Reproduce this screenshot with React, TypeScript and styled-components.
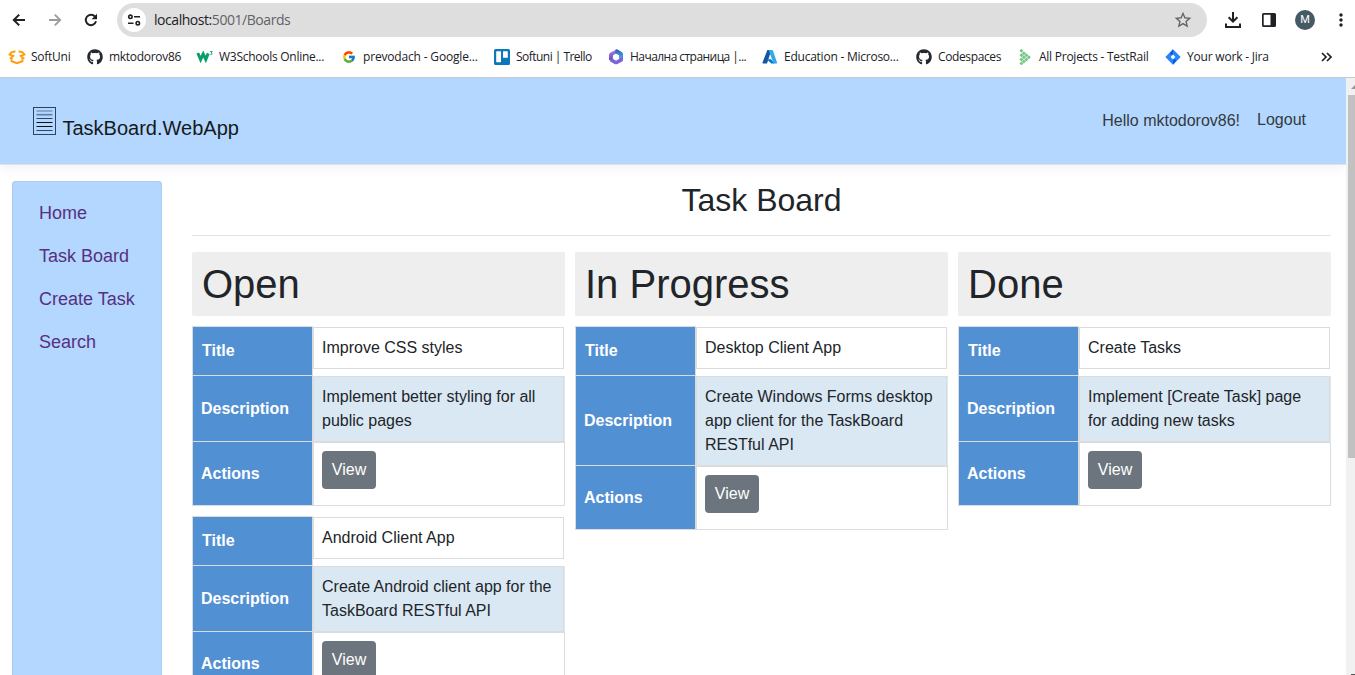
import React from 'react';
import styled, { createGlobalStyle } from 'styled-components';
import { FaGithub } from 'react-icons/fa';
import { FcGoogle } from 'react-icons/fc';
import { MdStarBorder, MdMoreVert } from 'react-icons/md';

const GlobalStyle = createGlobalStyle`
  *, *::before, *::after { box-sizing: border-box; }
  html, body { margin: 0; padding: 0; overflow: hidden; background: #fff; }
  body { font-family: "Liberation Sans", Arial, sans-serif; font-size: 16px; line-height: 1.5; color: #212529; }
  h1, h2, p { margin: 0; font-weight: 400; }
  svg { display: block; flex: none; }
`;

const Window = styled.div`
  display: flex;
  flex-direction: column;
  width: 1355px;
  height: 675px;
  overflow: hidden;
`;

const Toolbar = styled.div`
  display: flex;
  align-items: center;
  height: 40px;
  flex: none;
  padding-left: 9px;
  color: #202124;
`;

const ToolButton = styled.span<{ $width: number; $color?: string }>`
  display: flex;
  justify-content: center;
  width: ${(p) => p.$width}px;
  color: ${(p) => p.$color ?? '#202124'};
`;

const AddressBar = styled.div`
  display: flex;
  align-items: center;
  width: 1090px;
  height: 34px;
  padding: 0 14px 0 5px;
  border-radius: 17px;
  background: #dedede;
`;

const SiteInfo = styled.span`
  display: flex;
  align-items: center;
  justify-content: center;
  width: 24px;
  height: 24px;
  border-radius: 50%;
  background: #fff;
`;

const Url = styled.span`
  flex: 1;
  padding-left: 8px;
  font: 14px/20px "Open Sans", "Noto Sans", sans-serif;
  letter-spacing: -0.45px;
  color: #5f6368;
  b { font-weight: 400; color: #202124; }
`;

const Avatar = styled.span`
  width: 20px;
  height: 20px;
  border-radius: 50%;
  background: #455a64;
  color: #fff;
  font: 11px/20px Roboto, sans-serif;
  text-align: center;
`;

const Bookmarks = styled.div`
  display: flex;
  align-items: center;
  height: 38px;
  flex: none;
  padding: 0 0 3px 8px;
  border-bottom: 1px solid #c9cacc;
`;

const Bookmark = styled.span<{ $width: number; $spacing: number }>`
  display: flex;
  align-items: center;
  flex: none;
  gap: 5px;
  width: ${(p) => p.$width}px;
  white-space: nowrap;
  font: 12px/16px "Open Sans", "Noto Sans", sans-serif;
  letter-spacing: ${(p) => p.$spacing}px;
  color: #202124;
`;

const IconSlot = styled.span`
  display: flex;
  justify-content: center;
  width: 18px;
`;

const Viewport = styled.div`
  display: flex;
  flex: 1;
  min-height: 0;
`;

const Page = styled.div`
  display: flex;
  flex-direction: column;
  width: 1346px;
  overflow: hidden;
`;

const Header = styled.header`
  display: flex;
  justify-content: space-between;
  height: 87px;
  flex: none;
  padding: 0 40px 0 32px;
  background: #b3d7ff;
  border-bottom: 1px solid #dee2e6;
  box-shadow: 0 4px 12px rgba(0, 0, 0, 0.05);
`;

const Brand = styled.div`
  display: flex;
  align-items: flex-start;
  gap: 5.5px;
  padding-top: 28px;
`;

const BrandName = styled.span`
  padding-top: 7px;
  font-size: 20px;
  line-height: 30px;
  color: #16191c;
`;

const UserLinks = styled.div`
  display: flex;
  gap: 17px;
  padding-top: 30px;
  line-height: 24px;
  color: #343a40;
`;

const Greeting = styled.span`
  padding-top: 1px;
`;

const Body = styled.div`
  display: flex;
  flex: 1;
  gap: 30px;
  min-height: 0;
  padding: 16px 15px 0 12px;
`;

const Sidebar = styled.nav`
  display: flex;
  flex-direction: column;
  width: 150px;
  height: 600px;
  padding: 10px 0 0 26px;
  background: #b3d7ff;
  border: 1px solid #a9cdf3;
  border-radius: 3px;
`;

const NavItem = styled.a`
  height: 43px;
  font-size: 18px;
  line-height: 43px;
  color: #563081;
`;

const Main = styled.main`
  width: 1139px;
`;

const PageTitle = styled.h2`
  height: 55px;
  border-bottom: 1px solid #e2e2e3;
  font-size: 32px;
  line-height: 38px;
  text-align: center;
`;

const Columns = styled.div`
  display: flex;
  align-items: flex-start;
  gap: 10px;
  padding-top: 16px;
`;

const Column = styled.section`
  display: flex;
  flex-direction: column;
  gap: 10px;
  width: 373px;
`;

const ColumnTitle = styled.h1`
  height: 64px;
  padding: 8px 10px;
  border-radius: 2px;
  background: #eee;
  font-size: 40px;
  line-height: 48px;
`;

const TaskCard = styled.article`
  display: flex;
  flex-direction: column;
`;

const Row = styled.div<{ $shaded?: boolean }>`
  display: flex;
  background: ${(p) => (p.$shaded ? '#dae8f4' : '#fff')};
`;

const Label = styled.div<{ $first?: boolean }>`
  display: flex;
  align-items: center;
  width: 121px;
  padding-left: ${(p) => (p.$first ? 9 : 8)}px;
  background: #5290d4;
  border: 1px solid #d9dcdf;
  border-top-width: ${(p) => (p.$first ? 1 : 0)}px;
  font-weight: 700;
  color: #fff;
`;

const Value = styled.div<{ $kind: 'title' | 'text' | 'actions' }>`
  flex: 1;
  padding: ${(p) => (p.$kind === 'actions' ? '8px 8px 16px' : '8px')};
  margin: ${(p) => (p.$kind === 'title' ? '1px 1px 7px 0' : p.$kind === 'text' ? '0 1px 0 0' : '0')};
  border: 1px solid #dcdcdc;
  color: #212529;
`;

const ViewButton = styled.button`
  display: block;
  width: 54px;
  height: 38px;
  padding: 0 0 1px;
  border: 0;
  border-radius: 4px;
  background: #6c757d;
  color: #fff;
  font: 16px/24px "Liberation Sans", Arial, sans-serif;
`;

const Scrollbar = styled.div`
  display: flex;
  flex-direction: column;
  align-items: flex-end;
  justify-content: space-between;
  width: 9px;
  padding-top: 7px;
  background: #f1f1f1;
`;

const Thumb = styled.div`
  width: 7px;
  height: 363px;
  margin: 6px 0 auto;
  background: #c1c1c1;
`;

const DownMark = styled.div`
  width: 4px;
  height: 1px;
  background: #505050;
`;

const BackIcon = () => (
  <svg width="14" height="14" viewBox="0 0 14 14" fill="none" stroke="currentColor" strokeWidth="2">
    <path d="M13 7H2.200M7.200 1.600 1.800 7l5.400 5.400" />
  </svg>
);

const ForwardIcon = () => (
  <svg width="14" height="14" viewBox="0 0 14 14" fill="none" stroke="currentColor" strokeWidth="1.800">
    <path d="M1 7h10.800M6.800 1.600 12.200 7l-5.400 5.400" />
  </svg>
);

const ReloadIcon = () => (
  <svg width="14" height="14" viewBox="0 0 14 14">
    <path d="M12 8.300A5.200 5.200 0 1 1 10.900 3.500L12 4.700" fill="none" stroke="currentColor" strokeWidth="2" />
    <path d="M13 .8v5.400H7.600z" fill="currentColor" />
  </svg>
);

const SoftUniIcon = () => (
  <svg width="18" height="16" viewBox="0 0 18 16" fill="none" stroke="#ff9f0d" strokeWidth="2">
    <path d="M7.4 2.2 3.4 3.4 1.6 5.6l4.6 1.6M10.6 2.2l4 1.2 1.8 2.2-4.6 1.6M3.6 7.4v1.8M14.4 7.4v1.8M3.6 10.6v1.6L9 14.2l5.4-2v-1.6M1.6 9.2h3.2M13.2 9.2h3.2" />
  </svg>
);

const W3Icon = () => (
  <svg width="18" height="16" viewBox="0 0 18 16" fill="none" stroke="#0a9e68">
    <path d="M1.800 4 4.600 10.500 7.200 5 9.800 10.500 12.200 4.400" strokeWidth="3" />
    <path d="M14 2.600h2.200L15.200 4c1.600.1 1.300 2-.9 1.600" strokeWidth=".9" />
  </svg>
);

const TrelloIcon = () => (
  <svg width="16" height="16" viewBox="0 0 16 16">
    <rect width="16" height="16" rx="1.5" fill="#0c78b8" />
    <rect x="2.2" y="2.2" width="4.8" height="11" rx=".6" fill="#fff" />
    <rect x="9" y="2.2" width="4.8" height="6.6" rx=".6" fill="#fff" />
  </svg>
);

const OfficeIcon = () => (
  <svg width="16" height="16" viewBox="0 0 16 16">
    <defs>
      <linearGradient id="hexLeft" x1="0" y1="0" x2="0" y2="1">
        <stop offset="0" stopColor="#b07be6" />
        <stop offset="1" stopColor="#5a4fc0" />
      </linearGradient>
      <linearGradient id="hexRight" x1="0" y1="0" x2="0" y2="1">
        <stop offset="0" stopColor="#2b5fb8" />
        <stop offset="1" stopColor="#55b4ee" />
      </linearGradient>
    </defs>
    <path d="M8.5.5 2.6 3.4Q1 4.4 1 6v5l3.5 1.5L5.2 6.5 8 4.8z" fill="url(#hexLeft)" />
    <path d="M7.5.6Q9 0 10 .8L13.7 3q1.3.8 1.3 2.4V11l-4-1.2V6.4L7.2 4.2z" fill="url(#hexRight)" />
    <path d="M15 8v2.8q0 1.4-1.2 2L9.4 15q-1.4.7-2.8 0L1.8 12.2 5 9.8l3 1.7 3-1.7z" fill="#7c63da" />
    <path d="m8 4.7 3 1.7v3.4l-3 1.7-3-1.7V6.4z" fill="#fff" />
  </svg>
);

const AzureIcon = () => (
  <svg width="16" height="16" viewBox="0 0 16 16">
    <path d="M5.4 1h4L5 14.6H1.3c-.7 0-1-.5-.8-1.1z" fill="#13569f" />
    <path d="M9 10.2H4.6l4.8 4.4h3.2z" fill="#0078d4" />
    <path d="M6.6 1H10c.5 0 .8.3 1 .8l4 11.7c.2.6-.2 1.1-.8 1.1h-3.8c.6 0 .9-.5.7-1.1z" fill="#32a9e7" />
  </svg>
);

const testRailDots = [[3, 1.8], [5.5, 4.2], [8, 6.2], [10.5, 8.2], [8, 10.4], [5.5, 12.4], [3, 14.4], [3, 6.2], [5.5, 8.2], [3, 10.4]];

const TestRailIcon = () => (
  <svg width="16" height="16" viewBox="0 0 16 16">
    {testRailDots.map(([x, y]) => (
      <rect key={`${x}-${y}`} x={x} y={y - 1.4} width="2.8" height="2.8" fill="#75c788" transform={`rotate(45 ${x + 1.4} ${y})`} />
    ))}
  </svg>
);

const JiraIcon = () => (
  <svg width="16" height="16" viewBox="0 0 16 16">
    <path d="M8 .3 15.7 8 8 15.7.3 8z" fill="#2684ff" />
    <path d="M8 .3 4.7 4.2 8 7zM8 15.7l3.3-3.9L8 9z" fill="#0e5ad6" />
    <path d="M8 5.6 10.4 8 8 10.4 5.6 8z" fill="#fff" />
  </svg>
);

const TuneIcon = () => (
  <svg width="14" height="12" viewBox="0 0 14 12" fill="none" stroke="#202124" strokeWidth="1.6">
    <circle cx="3.4" cy="2.8" r="1.7" />
    <path d="M7 2.8h6M1 9.2h5.5" />
    <circle cx="10.8" cy="9.2" r="1.7" />
  </svg>
);

const DownloadIcon = () => (
  <svg width="16" height="16" viewBox="0 0 16 16">
    <path d="M8 0v9M3.6 5.2 8 9.6l4.4-4.4M1 11.5V15h14v-3.5" fill="none" stroke="#202124" strokeWidth="2" />
  </svg>
);

const PanelIcon = () => (
  <svg width="14" height="14" viewBox="0 0 14 14">
    <path d="M1.500 0h11Q14 0 14 1.500v11q0 1.500-1.500 1.500h-11Q0 14 0 12.500v-11Q0 0 1.500 0zM1.700 1.700v10.600H8.500V1.700z" fill="#202124" fillRule="evenodd" />
  </svg>
);

const MoreIcon = () => (
  <svg width="12" height="10" viewBox="0 0 12 10" fill="none" stroke="#202124" strokeWidth="1.7">
    <path d="m2 1 4 4-4 4M7 1l4 4-4 4" />
  </svg>
);

const pageLines = [
  { y: 5, shade: '#7f9ec4', weight: 1.6 },
  { y: 8.7, shade: '#5f7da2', weight: 1.6 },
  { y: 12.5, shade: '#33475e', weight: 1 },
  { y: 16.5, shade: '#0c1219', weight: 1 },
  { y: 20.5, shade: '#0c1219', weight: 1 },
  { y: 24.5, shade: '#33475e', weight: 1 },
];

const PageIcon = () => (
  <svg width="25" height="30" viewBox="0 0 25 30">
    <rect x="1.5" y="1.5" width="22" height="27" fill="none" stroke="#2b4360" />
    {pageLines.map((line) => (
      <path key={line.y} d={`M4.5 ${line.y}h16`} stroke={line.shade} strokeWidth={line.weight} />
    ))}
  </svg>
);

const bookmarks = [
  { label: 'SoftUni', width: 78, spacing: -0.25, icon: <SoftUniIcon /> },
  { label: 'mktodorov86', width: 110, spacing: -0.3, icon: <FaGithub size={16} color="#24292f" /> },
  { label: 'W3Schools Online...', width: 144, spacing: -0.27, icon: <W3Icon /> },
  { label: 'prevodach - Google...', width: 153, spacing: -0.17, icon: <FcGoogle size={14} /> },
  { label: 'Softuni | Trello', width: 114, spacing: -0.53, icon: <TrelloIcon /> },
  { label: 'Начална страница |...', width: 154, spacing: -0.55, icon: <OfficeIcon /> },
  { label: 'Education - Microso...', width: 154, spacing: -0.24, icon: <AzureIcon /> },
  { label: 'Codespaces', width: 101, spacing: -0.38, icon: <FaGithub size={16} color="#24292f" /> },
  { label: 'All Projects - TestRail', width: 148, spacing: -0.25, icon: <TestRailIcon /> },
  { label: 'Your work - Jira', width: 156, spacing: -0.2, icon: <JiraIcon /> },
];

type Task = { title: string; description: string[] };

const board: { name: string; tasks: Task[] }[] = [
  {
    name: 'Open',
    tasks: [
      { title: 'Improve CSS styles', description: ['Implement better styling for all', 'public pages'] },
      { title: 'Android Client App', description: ['Create Android client app for the', 'TaskBoard RESTful API'] },
    ],
  },
  {
    name: 'In Progress',
    tasks: [
      { title: 'Desktop Client App', description: ['Create Windows Forms desktop', 'app client for the TaskBoard', 'RESTful API'] },
    ],
  },
  {
    name: 'Done',
    tasks: [{ title: 'Create Tasks', description: ['Implement [Create Task] page', 'for adding new tasks'] }],
  },
];

const TaskView = ({ task }: { task: Task }) => (
  <TaskCard>
    <Row>
      <Label $first>Title</Label>
      <Value $kind="title">{task.title}</Value>
    </Row>
    <Row $shaded>
      <Label>Description</Label>
      <Value $kind="text">
        {task.description.map((line) => (
          <p key={line}>{line}</p>
        ))}
      </Value>
    </Row>
    <Row>
      <Label>Actions</Label>
      <Value $kind="actions">
        <ViewButton>View</ViewButton>
      </Value>
    </Row>
  </TaskCard>
);

export default function App() {
  return (
    <Window>
      <GlobalStyle />
      <Toolbar>
        <ToolButton $width={20}><BackIcon /></ToolButton>
        <ToolButton $width={52} $color="#9b9c9e"><ForwardIcon /></ToolButton>
        <ToolButton $width={20}><ReloadIcon /></ToolButton>
        <ToolButton $width={16} />
        <AddressBar>
          <SiteInfo><TuneIcon /></SiteInfo>
          <Url><b>localhost:</b>5001/Boards</Url>
          <MdStarBorder size={20} color="#5f6368" />
        </AddressBar>
        <ToolButton $width={52}><DownloadIcon /></ToolButton>
        <ToolButton $width={20}><PanelIcon /></ToolButton>
        <ToolButton $width={52}><Avatar>M</Avatar></ToolButton>
        <ToolButton $width={20}><MdMoreVert size={20} /></ToolButton>
      </Toolbar>
      <Bookmarks>
        {bookmarks.map((b) => (
          <Bookmark key={b.label} $width={b.width} $spacing={b.spacing}>
            <IconSlot>{b.icon}</IconSlot>
            {b.label}
          </Bookmark>
        ))}
        <MoreIcon />
      </Bookmarks>
      <Viewport>
        <Page>
          <Header>
            <Brand>
              <PageIcon />
              <BrandName>TaskBoard.WebApp</BrandName>
            </Brand>
            <UserLinks>
              <Greeting>Hello mktodorov86!</Greeting>
              <span>Logout</span>
            </UserLinks>
          </Header>
          <Body>
            <Sidebar>
              <NavItem>Home</NavItem>
              <NavItem>Task Board</NavItem>
              <NavItem>Create Task</NavItem>
              <NavItem>Search</NavItem>
            </Sidebar>
            <Main>
              <PageTitle>Task Board</PageTitle>
              <Columns>
                {board.map((column) => (
                  <Column key={column.name}>
                    <ColumnTitle>{column.name}</ColumnTitle>
                    {column.tasks.map((task) => (
                      <TaskView key={task.title} task={task} />
                    ))}
                  </Column>
                ))}
              </Columns>
            </Main>
          </Body>
        </Page>
        <Scrollbar>
          <svg width="4" height="4" viewBox="0 0 4 4"><path d="M0 4 4 0v4z" fill="#969696" /></svg>
          <Thumb />
          <DownMark />
        </Scrollbar>
      </Viewport>
    </Window>
  );
}
